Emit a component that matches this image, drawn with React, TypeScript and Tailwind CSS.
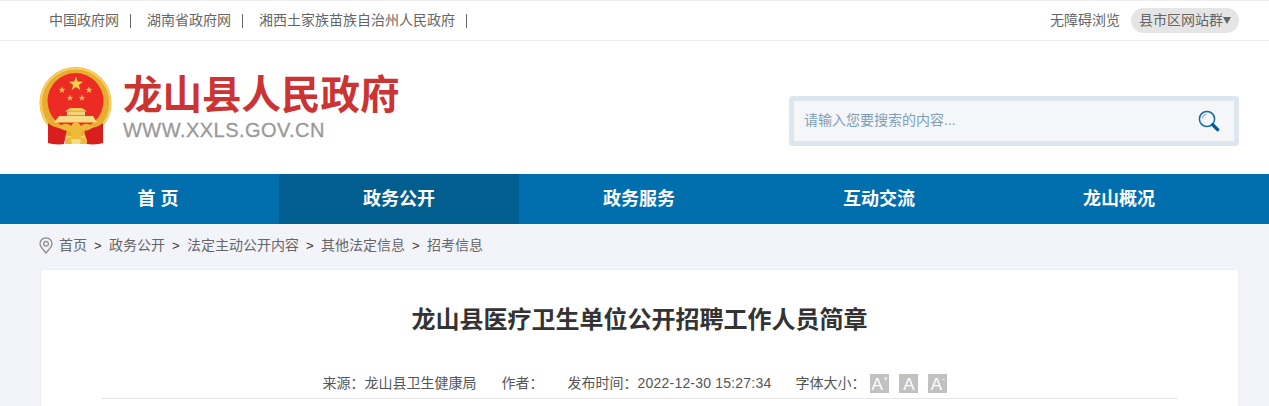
import React from 'react';

const FONT = "font-['Microsoft_YaHei','Liberation_Sans','Noto_Sans_CJK_SC',sans-serif]";

const topLinks = ['中国政府网', '湖南省政府网', '湘西土家族苗族自治州人民政府'];
const navItems = ['首 页', '政务公开', '政务服务', '互动交流', '龙山概况'];
const crumbs = ['政务公开', '法定主动公开内容', '其他法定信息', '招考信息'];

// 五角星
const star = (cx: number, cy: number, r: number) => {
    const pts: string[] = [];
    for (let i = 0; i < 10; i++) {
        const radius = i % 2 === 0 ? r : r * 0.4;
        const a = (Math.PI / 5) * i - Math.PI / 2;
        pts.push(`${(cx + radius * Math.cos(a)).toFixed(2)},${(cy + radius * Math.sin(a)).toFixed(2)}`);
    }
    return pts.join(' ');
};

const Emblem: React.FC = () => (
    <svg width="74" height="78" viewBox="0 0 74 78" className="shrink-0">
        <circle cx="36.5" cy="36" r="36" fill="#e8ad2e" />
        <circle cx="36.5" cy="36" r="34.6" fill="none" stroke="#f6d062" strokeWidth="2" />
        <circle cx="36.5" cy="34" r="28" fill="#ec2b25" />
        <polygon points={star(37, 17, 7.5)} fill="#f5d04e" />
        <polygon points={star(23, 23, 3.6)} fill="#f2c648" />
        <polygon points={star(50, 23, 3.6)} fill="#f2c648" />
        <polygon points={star(31, 31, 3.4)} fill="#f2c648" />
        <polygon points={star(43, 31, 3.4)} fill="#f2c648" />
        <path d="M31 41h12l5 3.5H26z" fill="#f6c95c" />
        <rect x="28" y="44.5" width="18" height="4" fill="#f3d27a" />
        <path d="M20 49h34l4 6.5H15z" fill="#f8dc84" />
        <path d="M9 56c5 4 12 6 19 6l-3 15c-6 1-13 0-16-1z" fill="#d81f1d" />
        <path d="M64 56c-5 4-12 6-19 6l3 15c6 1 13 0 16-1z" fill="#d81f1d" />
        <path d="M20 60c4-4 9-4 12-1 2-3 3-4 5-4s3 1 5 4c3-3 8-3 12 1-3 3-7 4-11 4 0 3-1 5-2 6l7 2v5H26v-5l7-2c-1-1-2-3-2-6-4 0-8-1-11-4z" fill="#edb936" />
        <path d="M32 72h10l-1 5h-8z" fill="#f6dc8a" />
    </svg>
);

const SearchIcon: React.FC = () => (
    <svg width="22" height="22" viewBox="0 0 22 22">
        <circle cx="9" cy="9" r="7.6" fill="none" stroke="#1668a6" strokeWidth="1.5" />
        <path d="M4.5 8.5C4.8 6 6.4 4.6 8.6 4.2" fill="none" stroke="#8db8d8" strokeWidth="1.2" />
        <path d="M14.6 14.6l5 5" stroke="#045a96" strokeWidth="3.4" strokeLinecap="round" />
    </svg>
);

const PinIcon: React.FC = () => (
    <svg width="14" height="17" viewBox="0 0 14 17">
        <path d="M7 16C3.5 12 1 9.6 1 6.8a6 6 0 0 1 12 0C13 9.6 10.5 12 7 16z" fill="none" stroke="#8c8c8c" strokeWidth="1.3" />
        <circle cx="7" cy="6.8" r="2.4" fill="none" stroke="#8c8c8c" strokeWidth="1.2" />
    </svg>
);

const FontButton: React.FC<{ mark?: string }> = ({ mark }) => (
    <span className="w-[19px] h-[19px] bg-[#c1c1c1] text-white flex items-start justify-center text-[17px] leading-[21px] font-['Liberation_Sans',sans-serif]">
        A
        {mark && <span className="text-[9px] leading-[10px]">{mark}</span>}
    </span>
);

const App: React.FC = () => {
    return (
        <div className={`${FONT} h-[406px] overflow-hidden bg-[#f3f4f9] text-[14px]`}>
            {/* 顶部链接 */}
            <div className="bg-white h-[41px] border-t-[1px] border-b border-[#eeeeee]">
                <div className="w-[1200px] ml-[39px] h-[39px] flex items-center justify-between">
                    <ul className="flex items-center pl-[10px] text-[#666666]">
                        {topLinks.map((t) => (
                            <li key={t} className="flex items-center">
                                <span>{t}</span>
                                <span className="w-px h-[14px] bg-[#666666] ml-[11px] mr-[16px]" />
                            </li>
                        ))}
                    </ul>
                    <div className="flex items-center text-[#666666]">
                        <span className="mr-[11px]">无障碍浏览</span>
                        <span className="h-[25px] w-[108px] rounded-full bg-[#e5e5e5] pl-[8px] flex items-center whitespace-nowrap">
                            县市区网站群
                            <svg width="8" height="7" viewBox="0 0 8 7">
                                <path d="M0 0h8L4 7z" fill="#666666" />
                            </svg>
                        </span>
                    </div>
                </div>
            </div>

            {/* 标题和搜索 */}
            <div className="bg-white h-[133px]">
                <div className="w-[1200px] ml-[39px] h-full flex items-center justify-between pb-[2px]">
                    <div className="flex items-center gap-[10px] pb-[2px]">
                        <Emblem />
                        <div className="flex flex-col pt-[3px]">
                            <span className="text-[39.5px] leading-[46px] font-bold text-[#cc3333] whitespace-nowrap">龙山县人民政府</span>
                            <span className="text-[20px] leading-[24px] text-[#999999] tracking-[0.47px] [-webkit-text-stroke:0.3px_#999999] font-['Liberation_Sans',sans-serif]">WWW.XXLS.GOV.CN</span>
                        </div>
                    </div>
                    <div className="w-[450px] h-[50px] mt-[28px] rounded-[4px] border-[5px] border-[#dbe6ee] bg-[#f4f6f8] flex items-center justify-between pl-[10px] pr-[14px]">
                        <span className="text-[14px] text-[#7f9fb8]">请输入您要搜索的内容...</span>
                        <SearchIcon />
                    </div>
                </div>
            </div>

            {/* 导航 */}
            <nav className="bg-[#016fad] h-[50px]">
                <ul className="w-[1200px] ml-[39px] flex h-full">
                    {navItems.map((n, i) => (
                        <li
                            key={n}
                            className={`w-[240px] flex items-center justify-center text-white text-[18px] font-bold ${i === 1 ? 'bg-[#035e90]' : ''} ${i === 0 ? 'pr-[2px]' : ''}`}
                        >
                            {n}
                        </li>
                    ))}
                </ul>
            </nav>

            {/* 面包屑 */}
            <div className="w-[1200px] ml-[39px] h-[45px] pb-[2px] flex items-center text-[#666666]">
                <PinIcon />
                <span className="ml-[6px]">首页</span>
                {crumbs.map((c) => (
                    <React.Fragment key={c}>
                        <span className="w-[8px] mx-[7px] text-[#333333] text-[13px]">&gt;</span>
                        <span>{c}</span>
                    </React.Fragment>
                ))}
            </div>

            {/* 正文卡片 */}
            <div className="w-[1199px] ml-[40px] bg-white border-t border-x border-[#eeeeee] h-[200px] px-[60px] pt-[32px]">
                <h1 className="text-center text-[24px] leading-[36px] font-bold text-[#333333]">龙山县医疗卫生单位公开招聘工作人员简章</h1>
                <div className="mt-[33px] h-[28px] border-b border-[#e5e5e5] flex items-start justify-center text-[#555555] text-[14px] leading-[24px] pr-[9px]">
                    <span>来源：龙山县卫生健康局</span>
                    <span className="ml-[25px]">作者：</span>
                    <span className="ml-[24px]">发布时间：<span className="tracking-[0.2px]">2022-12-30 15:27:34</span></span>
                    <span className="ml-[24px]">字体大小：</span>
                    <span className="flex gap-[10px] ml-[5px] mt-[3px]">
                        <FontButton mark="+" />
                        <FontButton />
                        <FontButton mark="-" />
                    </span>
                </div>
            </div>
        </div>
    );
};

export default App;
